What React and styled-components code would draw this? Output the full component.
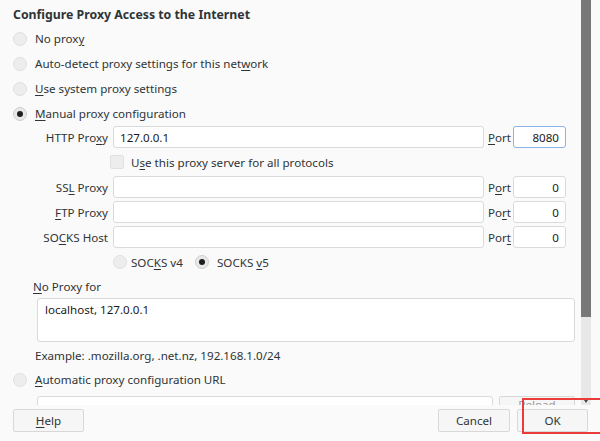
import React from 'react';
import styled, { createGlobalStyle } from 'styled-components';

const GlobalStyle = createGlobalStyle`
  html, body {
    margin: 0;
    padding: 0;
    background: #fafafa;
  }
  body {
    font-family: "Noto Sans", "Open Sans", sans-serif;
    font-size: 11.6px;
    color: #2e3436;
  }
`;

const Dialog = styled.div`
  position: relative;
  width: 600px;
  height: 441px;
  overflow: hidden;
  background: #fafafa;
  display: flex;
  flex-direction: column;
`;

const Scroller = styled.div`
  height: 405px;
  display: flex;
  flex-shrink: 0;
`;

const Content = styled.div`
  width: 581px;
  overflow: hidden;
  padding: 4px 0 0 13px;
  box-sizing: border-box;
`;

const Scrollbar = styled.div`
  width: 10px;
  background: #e8e8e8;
  display: flex;
  flex-direction: column;
`;

const Thumb = styled.div`
  height: 317px;
  background: #787878;
`;

const ScrollArrow = styled.div`
  margin-top: auto;
  margin-bottom: 2px;
  align-self: center;
  width: 0;
  height: 0;
  border-left: 2px solid transparent;
  border-right: 2px solid transparent;
  border-top: 3px solid #444;
`;

const RightGutter = styled.div`
  width: 9px;
  background: #fafafa;
`;

const Title = styled.h1`
  margin: 0;
  font-size: 12.3px;
  font-weight: 700;
  line-height: 22px;
  color: #2e3436;
`;

const RadioRow = styled.label`
  display: flex;
  align-items: center;
  height: 25px;
  gap: 8px;
`;

const Radio = styled.span`
  width: 14px;
  height: 14px;
  border-radius: 50%;
  box-sizing: border-box;
  flex-shrink: 0;
  border: 1px solid ${p => (p.checked ? '#cfcfcf' : '#e0e0e0')};
  background: ${p => (p.checked ? '#e8e8e8' : '#ededed')};
  display: flex;
  align-items: center;
  justify-content: center;
  &::after {
    content: '';
    width: 6px;
    height: 6px;
    border-radius: 50%;
    background: #1c1f20;
    display: ${p => (p.checked ? 'block' : 'none')};
  }
`;

const Key = styled.span`
  text-decoration: underline;
  text-underline-offset: 2px;
`;

const ProxyGrid = styled.div`
  display: grid;
  grid-template-columns: 100px 371px 29px 53px;
  grid-auto-rows: 22px;
  row-gap: 3px;
  align-items: center;
`;

const FieldLabel = styled.span`
  text-align: right;
  padding-right: 5px;
  white-space: nowrap;
`;

const PortLabel = styled.span`
  padding-left: 4px;
`;

const Input = styled.div`
  height: 22px;
  box-sizing: border-box;
  background: #fff;
  border: 1px solid ${p => (p.focused ? '#8ab4e6' : '#dadada')};
  border-radius: 3px;
  padding: 0 6px;
  display: flex;
  align-items: center;
  justify-content: ${p => (p.right ? 'flex-end' : 'flex-start')};
  color: #1a1a1a;
  width: ${p => p.w || 'auto'};
`;

const CheckRow = styled.label`
  grid-column: 2 / 5;
  display: flex;
  align-items: center;
  gap: 7px;
  margin-left: -3px;
`;

const Checkbox = styled.span`
  width: 14px;
  height: 14px;
  box-sizing: border-box;
  border: 1px solid #e0e0e0;
  background: #ededed;
  border-radius: 2px;
`;

const SocksRow = styled.div`
  grid-column: 2 / 5;
  display: flex;
  align-items: center;
`;

const SocksOption = styled.label`
  display: flex;
  align-items: center;
  gap: ${p => p.gap || '4px'};
  width: ${p => p.w || 'auto'};
`;

const Caption = styled.div`
  height: 22px;
  line-height: 22px;
  padding-left: ${p => p.indent || '0'};
  margin-top: ${p => p.top || '0'};
`;

const TextArea = styled.div`
  margin-left: 24px;
  width: 538px;
  height: 44px;
  box-sizing: border-box;
  background: #fff;
  border: 1px solid #dadada;
  border-radius: 3px;
  padding: 3px 7px;
  color: #1a1a1a;
`;

const UrlRow = styled.div`
  display: flex;
  gap: 6px;
  margin-left: 24px;
  margin-top: 4px;
`;

const Button = styled.button`
  height: 23px;
  width: ${p => p.w};
  box-sizing: border-box;
  border: 1px solid #d8d8d8;
  border-radius: 2px;
  background: #f6f6f6;
  font-family: inherit;
  font-size: 11.6px;
  color: ${p => (p.dim ? '#9a9a9a' : '#2e3436')};
  padding: 0;
  display: flex;
  align-items: ${p => (p.top ? 'flex-start' : 'center')};
  justify-content: center;
  line-height: 16px;
`;

const Footer = styled.div`
  flex: 1;
  display: flex;
  align-items: flex-start;
  padding: 4px 12px 0 13px;
  gap: 7px;
`;

const Spacer = styled.div`
  flex: 1;
`;

const Highlight = styled.div`
  position: absolute;
  left: 522px;
  top: 398px;
  width: 90px;
  height: 36px;
  border: 2px solid #ec3b3b;
  box-sizing: border-box;
  pointer-events: none;
`;

const App = () => (
  <>
    <GlobalStyle />
    <Dialog>
      <Scroller>
        <Content>
          <Title>Configure Proxy Access to the Internet</Title>
          <RadioRow>
            <Radio />
            <span>No prox<Key>y</Key></span>
          </RadioRow>
          <RadioRow>
            <Radio />
            <span>Auto-detect proxy settings for this net<Key>w</Key>ork</span>
          </RadioRow>
          <RadioRow>
            <Radio />
            <span><Key>U</Key>se system proxy settings</span>
          </RadioRow>
          <RadioRow>
            <Radio checked />
            <span><Key>M</Key>anual proxy configuration</span>
          </RadioRow>

          <ProxyGrid>
            <FieldLabel>HTTP Pro<Key>x</Key>y</FieldLabel>
            <Input>127.0.0.1</Input>
            <PortLabel><Key>P</Key>ort</PortLabel>
            <Input focused right>8080</Input>

            <CheckRow>
              <Checkbox />
              <span>U<Key>s</Key>e this proxy server for all protocols</span>
            </CheckRow>

            <FieldLabel>SS<Key>L</Key> Proxy</FieldLabel>
            <Input />
            <PortLabel>P<Key>o</Key>rt</PortLabel>
            <Input right>0</Input>

            <FieldLabel><Key>F</Key>TP Proxy</FieldLabel>
            <Input />
            <PortLabel>Po<Key>r</Key>t</PortLabel>
            <Input right>0</Input>

            <FieldLabel>SO<Key>C</Key>KS Host</FieldLabel>
            <Input />
            <PortLabel>Por<Key>t</Key></PortLabel>
            <Input right>0</Input>

            <SocksRow>
              <SocksOption w="82px">
                <Radio />
                <span>SOC<Key>K</Key>S v4</span>
              </SocksOption>
              <SocksOption gap="8px">
                <Radio checked />
                <span>SOCKS <Key>v</Key>5</span>
              </SocksOption>
            </SocksRow>
          </ProxyGrid>

          <Caption indent="20px" top="3px"><Key>N</Key>o Proxy for</Caption>
          <TextArea>localhost, 127.0.0.1</TextArea>
          <Caption indent="22px" top="3px">Example: .mozilla.org, .net.nz, 192.168.1.0/24</Caption>
          <RadioRow>
            <Radio />
            <span><Key>A</Key>utomatic proxy configuration URL</span>
          </RadioRow>
          <UrlRow>
            <Input w="456px" />
            <Button w="76px" dim top>Reload</Button>
          </UrlRow>
        </Content>
        <Scrollbar>
          <Thumb />
          <ScrollArrow />
        </Scrollbar>
        <RightGutter />
      </Scroller>
      <Footer>
        <Button w="71px"><span><Key>H</Key>elp</span></Button>
        <Spacer />
        <Button w="72px">Cancel</Button>
        <Button w="71px">OK</Button>
      </Footer>
      <Highlight />
    </Dialog>
  </>
);

export default App;
